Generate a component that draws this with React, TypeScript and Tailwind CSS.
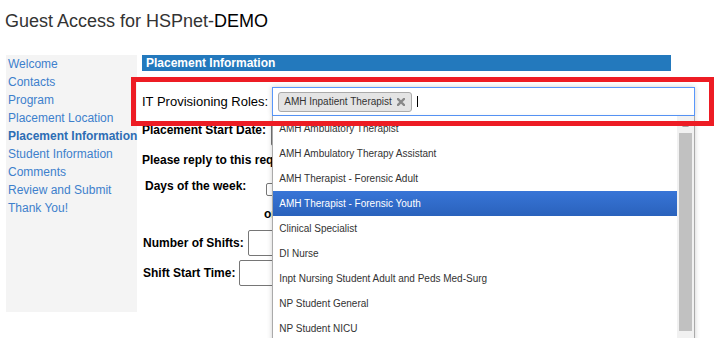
import React from 'react'

const navLinks = [
  { label: 'Welcome' },
  { label: 'Contacts' },
  { label: 'Program' },
  { label: 'Placement Location' },
  { label: 'Placement Information', active: true },
  { label: 'Student Information' },
  { label: 'Comments' },
  { label: 'Review and Submit' },
  { label: 'Thank You!' },
]

const roleOptions = [
  'AMH Ambulatory Therapist',
  'AMH Ambulatory Therapy Assistant',
  'AMH Therapist - Forensic Adult',
  'AMH Therapist - Forensic Youth',
  'Clinical Specialist',
  'DI Nurse',
  'Inpt Nursing Student Adult and Peds Med-Surg',
  'NP Student General',
  'NP Student NICU',
]

function Sidebar() {
  return (
    <div className="ml-[6px] w-[131px] h-[257px] shrink-0 bg-[#f4f4f4] pl-[2px]">
      {navLinks.map((link) => (
        <div
          key={link.label}
          className={
            link.active
              ? 'text-[12px] leading-[18px] whitespace-nowrap font-bold text-[#2d6db4]'
              : 'text-[12px] leading-[18px] whitespace-nowrap text-[#3d80cc]'
          }
        >
          {link.label}
        </div>
      ))}
    </div>
  )
}

function RolesSelect() {
  return (
    <div className="relative ml-[4px] w-[423px] h-[29px] shrink-0 flex items-center pl-[5px] bg-white border border-[#5897fb] shadow-[0_0_5px_rgba(0,0,0,0.2)]">
      {/* selected tag */}
      <div className="h-[20px] flex items-center pl-[5px] pr-[6px] bg-[#e4e4e4] border border-[#aaa] rounded-[3px] text-[10px] text-[#333] whitespace-nowrap">
        AMH Inpatient Therapist
        <svg className="ml-[5px]" width="8" height="8" viewBox="0 0 8 8">
          <path d="M1 1 L7 7 M7 1 L1 7" stroke="#888" strokeWidth="2.4" strokeLinecap="square" />
        </svg>
      </div>
      <div className="ml-[5px] w-[1px] h-[11px] bg-black" />

      {/* open dropdown */}
      <div className="absolute left-[-1px] top-[28px] w-[423px] h-[250px] z-10 flex bg-white border-l border-r border-[#aaa] shadow-[0_2px_5px_rgba(0,0,0,0.2)]">
        <div className="w-[404px]">
          {roleOptions.map((opt, i) => (
            <div
              key={opt}
              className={
                i === 3
                  ? 'h-[25px] leading-[25px] pl-[6px] text-[10px] text-white whitespace-nowrap bg-linear-to-b from-[#3875d7] to-[#2a62bc]'
                  : 'h-[25px] leading-[25px] pl-[6px] text-[10px] text-[#333] whitespace-nowrap'
              }
            >
              {opt}
            </div>
          ))}
        </div>
        <div className="w-[17px] bg-[#f1f1f1] flex flex-col">
          <div className="h-[17px] flex items-center justify-center">
            <svg width="7" height="4" viewBox="0 0 7 4">
              <path d="M0 4 L3.5 0 L7 4 Z" fill="#a3a3a3" />
            </svg>
          </div>
          <div className="mx-[2px] h-[198px] bg-[#c1c1c1]" />
        </div>
      </div>
    </div>
  )
}

function PlacementForm() {
  return (
    <div className="ml-[5px] w-[529px] shrink-0">
      <div className="h-[16px] bg-[#2379bd] pl-[4px] text-[12px] leading-[16px] font-bold text-white">
        Placement Information
      </div>

      <div className="mt-[16px] flex items-center h-[29px]">
        <span className="text-[13px] leading-[15px] text-black whitespace-nowrap">IT Provisioning Roles:</span>
        <RolesSelect />
      </div>

      <div className="mt-[4px] flex items-start h-[26px]">
        <span className="mt-[3px] text-[12px] leading-[14px] font-bold text-black whitespace-nowrap">
          Placement Start Date:
        </span>
        <div className="ml-[5px] w-[150px] h-[26px] border border-[#767676] rounded-[2px] bg-white" />
      </div>

      <div className="mt-[7px] text-[12px] leading-[14px] font-bold text-black whitespace-nowrap">
        Please reply to this request by
      </div>

      <div className="mt-[12px] flex items-start pl-[3px]">
        <span className="text-[12px] leading-[14px] font-bold text-black whitespace-nowrap">Days of the week:</span>
        <div className="ml-[20px] mt-[4px] w-[13px] h-[13px] border border-[#767676] rounded-[2px] bg-white" />
      </div>

      <div className="mt-[11px] pl-[122px] text-[12px] leading-[14px] font-bold text-black">or</div>

      <div className="mt-[9px] flex items-center h-[26px] pl-[1px]">
        <span className="text-[12px] leading-[14px] font-bold text-black whitespace-nowrap">Number of Shifts:</span>
        <div className="ml-[4px] w-[100px] h-[26px] border border-[#767676] rounded-[2px] bg-white" />
      </div>

      <div className="mt-[4px] flex items-center h-[26px] pl-[1px]">
        <span className="text-[12px] leading-[14px] font-bold text-black whitespace-nowrap">Shift Start Time:</span>
        <div className="ml-[4px] w-[100px] h-[26px] border border-[#767676] rounded-[2px] bg-white" />
      </div>
    </div>
  )
}

export default function App() {
  return (
    <div className="relative w-[719px] h-[338px] overflow-hidden bg-white font-['Liberation_Sans',Arial,sans-serif]">
      <h1 className="ml-[5px] pt-[11px] text-[18px] leading-[21px] font-normal text-[#333]">
        Guest Access for HSPnet-<span className="text-black">DEMO</span>
      </h1>

      <div className="mt-[23px] flex items-start">
        <Sidebar />
        <PlacementForm />
      </div>

      {/* red annotation box */}
      <div className="absolute left-[131px] top-[77px] w-[583px] h-[49px] border-[5px] border-[#ed1c24] z-20 pointer-events-none" />
    </div>
  )
}
